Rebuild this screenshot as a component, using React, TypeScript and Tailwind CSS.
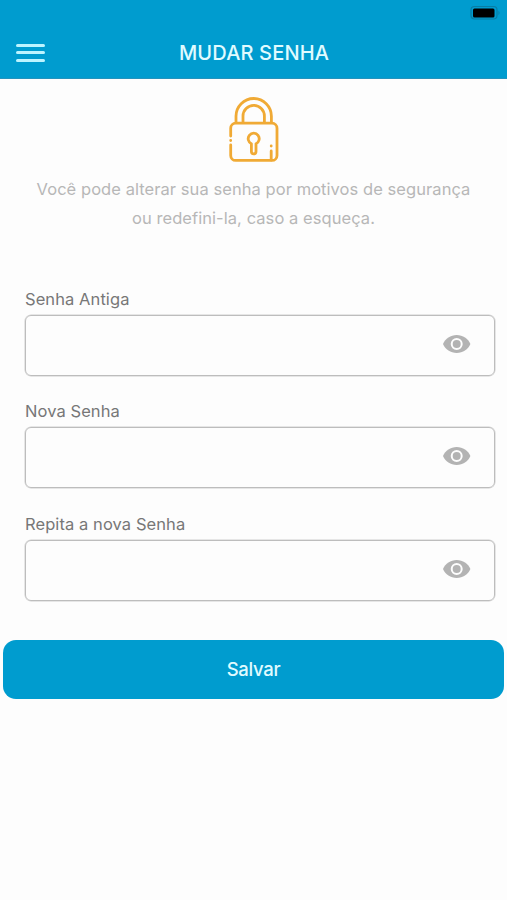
import React, { useState } from 'react';

interface PasswordFieldProps {
  id: string;
  label: string;
}

const LockIcon: React.FC = () => (
  <svg
    className="w-[52px] h-[68px]"
    viewBox="228 96 52 68"
    fill="none"
    stroke="#f0aa35"
    strokeWidth="2.8"
    strokeLinecap="round"
    strokeLinejoin="round"
  >
    {/* shackle */}
    <path d="M236 122V116.200a17.700 17.700 0 0 1 35.400 0V122" />
    <path d="M243 122V116a10.700 10.700 0 0 1 21.400 0V122" />
    {/* body */}
    <path d="M230.700 136V128.200a5 5 0 0 1 5-5H272a5 5 0 0 1 5 5V155.400a5 5 0 0 1-5 5H235.700a5 5 0 0 1-5-5V145" />
    <path d="M230.700 140.500v.01M271.200 146v.01M271.200 151v9" />
    {/* keyhole */}
    <path d="M251.400 143.700a5.500 5.500 0 1 1 4.600 0V151.500a2.300 2.300 0 0 1-4.600 0z" />
  </svg>
);

const EyeIcon: React.FC = () => (
  <svg className="w-7 h-5" viewBox="0 0 28 20" fill="none">
    <path d="M0 10C2.300 4.600 7.600 1 13.700 1S25.100 4.600 27.400 10C25.100 15.400 19.800 19 13.700 19S2.300 15.400 0 10z" fill="#b3b3b3" />
    <circle cx="13.700" cy="10" r="5" stroke="#fdfdfd" strokeWidth="2" />
  </svg>
);

const BatteryIcon: React.FC = () => (
  <svg className="w-[31px] h-[15px]" viewBox="0 0 31 15">
    <rect x="1" y="1.500" width="26" height="12.500" rx="3.500" fill="none" stroke="#087da4" strokeWidth="1.200" />
    <rect x="3" y="3.500" width="21.500" height="9" rx="1.500" fill="#000000" />
    <path d="M28.500 5.800q2 2.200 0 4.400z" fill="#087da4" />
  </svg>
);

const PasswordField: React.FC<PasswordFieldProps> = ({ id, label }) => {
  const [visible, setVisible] = useState(false);

  return (
    <div>
      <label htmlFor={id} className="block h-[27px] text-[16.500px] leading-[22px] text-[#777777] tracking-[0.080px]">
        {label}
      </label>
      <div className="flex items-center h-[61px] border border-[#bdbdbd] shadow-[0_0_0_0.500px_#d0d0d0] rounded-md pl-4 pr-[23px]">
        <input
          id={id}
          type={visible ? 'text' : 'password'}
          className="flex-1 min-w-0 h-full bg-transparent outline-none text-[#777777]"
        />
        <button type="button" className="-mt-[3px]" aria-label="Mostrar senha" onClick={() => setVisible(!visible)}>
          <EyeIcon />
        </button>
      </div>
    </div>
  );
};

const App: React.FC = () => {
  return (
    <div className="min-h-screen bg-[#fdfdfd] font-['Inter',sans-serif]">
      <header className="h-[79px] bg-[#009ccf] border-b border-[#2493bd]">
        <div className="flex justify-end h-[26px] pt-[5px] pr-[6px]">
          <BatteryIcon />
        </div>
        <div className="grid grid-cols-[60px_1fr_60px] items-center h-[53px]">
          <button type="button" className="flex flex-col gap-[4.500px] ml-4 w-[29px]" aria-label="Menu">
            <span className="h-[3px] w-full rounded-full bg-[#bdf4ff]" />
            <span className="h-[3px] w-full rounded-full bg-[#bdf4ff]" />
            <span className="h-[3px] w-full rounded-full bg-[#bdf4ff]" />
          </button>
          <h1 className="text-center text-[20px] font-medium text-[#e0fbff] tracking-[0.150px] pl-px">MUDAR SENHA</h1>
        </div>
      </header>

      <main>
        <section className="flex flex-col items-center pt-[17px]">
          <LockIcon />
          <p className="mt-[11px] text-center text-[16.500px] leading-[29px] text-[#b7b7b7] tracking-[0.060px] whitespace-nowrap">
            Você pode alterar sua senha por motivos de segurança
            <br />
            ou redefini-la, caso a esqueça.
          </p>
        </section>

        <form onSubmit={(e) => e.preventDefault()}>
          <div className="flex flex-col gap-[24.400px] mt-[55px] pl-[25px] pr-3">
            <PasswordField id="old" label="Senha Antiga" />
            <PasswordField id="new" label="Nova Senha" />
            <PasswordField id="repeat" label="Repita a nova Senha" />
          </div>
          <div className="mt-[39px] px-[3px]">
            <button type="submit" className="block w-full h-[59px] rounded-[13px] bg-[#009ccf] pt-0.5 text-[18.500px] font-medium text-[#e0fbff] tracking-[-0.300px]">
              Salvar
            </button>
          </div>
        </form>
      </main>
    </div>
  );
};

export default App;
